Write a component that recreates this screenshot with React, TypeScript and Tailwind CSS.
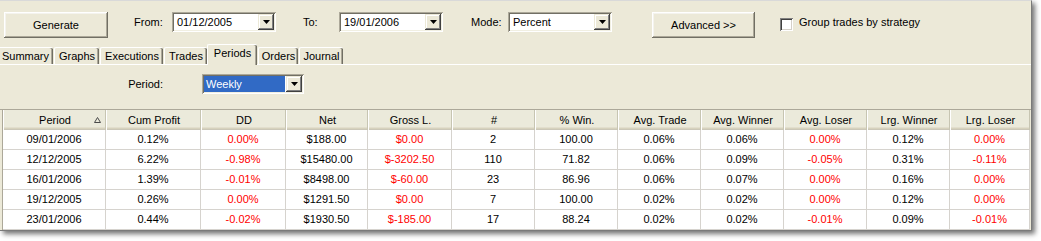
import React from 'react';

const tabs = [
    { label: 'Summary', w: 56, ml: -3 },
    { label: 'Graphs', w: 45, ml: 1 },
    { label: 'Executions', w: 63, ml: 1 },
    { label: 'Trades', w: 43, ml: 1 },
    { label: 'Periods', w: 50, ml: 0, active: true },
    { label: 'Orders', w: 40, ml: 1 },
    { label: 'Journal', w: 44, ml: 1 },
];

const columns = ['Period', 'Cum Profit', 'DD', 'Net', 'Gross L.', '#', '% Win.', 'Avg. Trade', 'Avg. Winner', 'Avg. Loser', 'Lrg. Winner', 'Lrg. Loser'];

// red columns: DD, Gross L., Avg. Loser, Lrg. Loser
const redCols = [2, 4, 9, 11];

const rows = [
    ['09/01/2006', '0.12%', '0.00%', '$188.00', '$0.00', '2', '100.00', '0.06%', '0.06%', '0.00%', '0.12%', '0.00%'],
    ['12/12/2005', '6.22%', '-0.98%', '$15480.00', '$-3202.50', '110', '71.82', '0.06%', '0.09%', '-0.05%', '0.31%', '-0.11%'],
    ['16/01/2006', '1.39%', '-0.01%', '$8498.00', '$-60.00', '23', '86.96', '0.06%', '0.07%', '0.00%', '0.16%', '0.00%'],
    ['19/12/2005', '0.26%', '0.00%', '$1291.50', '$0.00', '7', '100.00', '0.02%', '0.02%', '0.00%', '0.12%', '0.00%'],
    ['23/01/2006', '0.44%', '-0.02%', '$1930.50', '$-185.00', '17', '88.24', '0.02%', '0.02%', '-0.01%', '0.09%', '-0.01%'],
];

const DropArrow = () => (
    <div className="w-[16px] h-[16px] bg-[#ECE9D8] flex items-center justify-center shadow-[inset_-1px_-1px_#404040,inset_1px_1px_#ECE9D8,inset_-2px_-2px_#808080,inset_2px_2px_#ffffff]">
        <svg width="7" height="4" viewBox="0 0 7 4">
            <path d="M0 0h7L3.5 4z" fill="#000" />
        </svg>
    </div>
);

const Combo: React.FC<{ value: string; width: number; selected?: boolean }> = ({ value, width, selected }) => (
    <div
        className="h-[20px] bg-white flex items-center p-[2px] shadow-[inset_1px_1px_#ACA899,inset_-1px_-1px_#ffffff,inset_2px_2px_#716F64,inset_-2px_-2px_#F1EFE2]"
        style={{ width }}
    >
        <div className={`flex-1 h-full flex items-center pl-[2px] ${selected ? 'bg-[#316AC5] text-white mr-[1px]' : 'pl-[3px]'}`}>
            {value}
        </div>
        <DropArrow />
    </div>
);

const RaisedButton: React.FC<{ label: string; width: number; className?: string }> = ({ label, width, className }) => (
    <div
        className={`h-[26px] flex items-center justify-center bg-[#ECE9D8] shadow-[inset_-1px_-1px_#716F64,inset_1px_1px_#ffffff,inset_-2px_-2px_#ACA899,inset_2px_2px_#F4F3EE] ${className || ''}`}
        style={{ width }}
    >
        {label}
    </div>
);

const App: React.FC = () => {
    return (
        <div className="w-[1041px] h-[241px] bg-white font-['Liberation_Sans',Arial,sans-serif] text-[11px] leading-none text-black overflow-hidden">
            <div className="w-[1032px] h-[231px] bg-[#ECE9D8] border-t border-t-[#D9D9D9] border-r border-b border-[#7A7A7A] shadow-[3px_3px_5px_rgba(0,0,0,0.55)] overflow-hidden">
                {/* toolbar */}
                <div className="h-[42px] flex items-start pt-[11px] pl-[4px]">
                    <RaisedButton label="Generate" width={104} />
                    <div className="ml-[26px] w-[38px] h-[20px] flex items-center">From:</div>
                    <Combo value="01/12/2005" width={104} />
                    <div className="ml-[27px] w-[36px] h-[20px] flex items-center">To:</div>
                    <Combo value="19/01/2006" width={104} />
                    <div className="ml-[28px] w-[37px] h-[20px] flex items-center">Mode:</div>
                    <Combo value="Percent" width={104} />
                    <RaisedButton label="Advanced >>" width={103} className="ml-[40px]" />
                    <div className="ml-[25px] mt-[6px] w-[13px] h-[13px] bg-white shadow-[inset_1px_1px_#808080,inset_-1px_-1px_#ffffff,inset_2px_2px_#404040,inset_-2px_-2px_#D4D0C8]" />
                    <div className="ml-[6px] h-[20px] flex items-center">Group trades by strategy</div>
                </div>

                {/* tabs */}
                <div className="h-[22px] flex items-end border-b border-white">
                    {tabs.map((t) => (
                        <div
                            key={t.label}
                            className={`flex items-center justify-center bg-[#ECE9D8] border-t border-l border-white rounded-tl-[2px] rounded-tr-[2px] shadow-[inset_-1px_0_#716F64,inset_-2px_0_#ACA899] ${t.active ? 'h-[21px] mb-[-1px] relative z-10 pb-[3px]' : 'h-[17px]'}`}
                            style={{ width: t.w, marginLeft: t.ml }}
                        >
                            {t.label}
                        </div>
                    ))}
                </div>

                {/* period selector */}
                <div className="h-[45px] border-b border-[#ACA899] flex items-start pt-[9px]">
                    <div className="w-[163px] h-[20px] flex items-center justify-end">Period:</div>
                    <div className="ml-[39px]">
                        <Combo value="Weekly" width={102} selected />
                    </div>
                </div>

                {/* grid */}
                <div className="ml-[2px] w-[1028px] bg-white border-l border-[#ACA899]">
                    <div className="grid grid-cols-[103px_95px_85px_82px_84px_83px_83px_83px_83px_83px_83px_80px] h-[20px]">
                        {columns.map((c, i) => (
                            <div
                                key={c}
                                className="relative h-[20px] flex items-center justify-center bg-[#EBEADB] border-l border-white shadow-[inset_-1px_0_#C7C5B2,inset_0_-1px_#CBC7B8,inset_0_-2px_#D6D2BD,inset_0_-3px_#E2DECD]"
                            >
                                {c}
                                {i === 0 && (
                                    <svg className="absolute left-[90px] top-[7px]" width="7" height="6" viewBox="0 0 7 6">
                                        <path d="M3.5 0.5L6.5 5.5H0.5Z" fill="none" stroke="#4A4A4A" strokeWidth="1" />
                                    </svg>
                                )}
                            </div>
                        ))}
                    </div>
                    {rows.map((r, ri) => (
                        <div key={ri} className="grid grid-cols-[103px_95px_85px_82px_84px_83px_83px_83px_83px_83px_83px_80px] h-[20px]">
                            {r.map((v, ci) => (
                                <div
                                    key={ci}
                                    className={`h-[20px] flex items-center justify-center border-r border-b border-[#D6D3CE] ${redCols.includes(ci) ? 'text-[#FF0000]' : ''}`}
                                >
                                    {v}
                                </div>
                            ))}
                        </div>
                    ))}
                </div>
            </div>
        </div>
    );
};

export default App;
